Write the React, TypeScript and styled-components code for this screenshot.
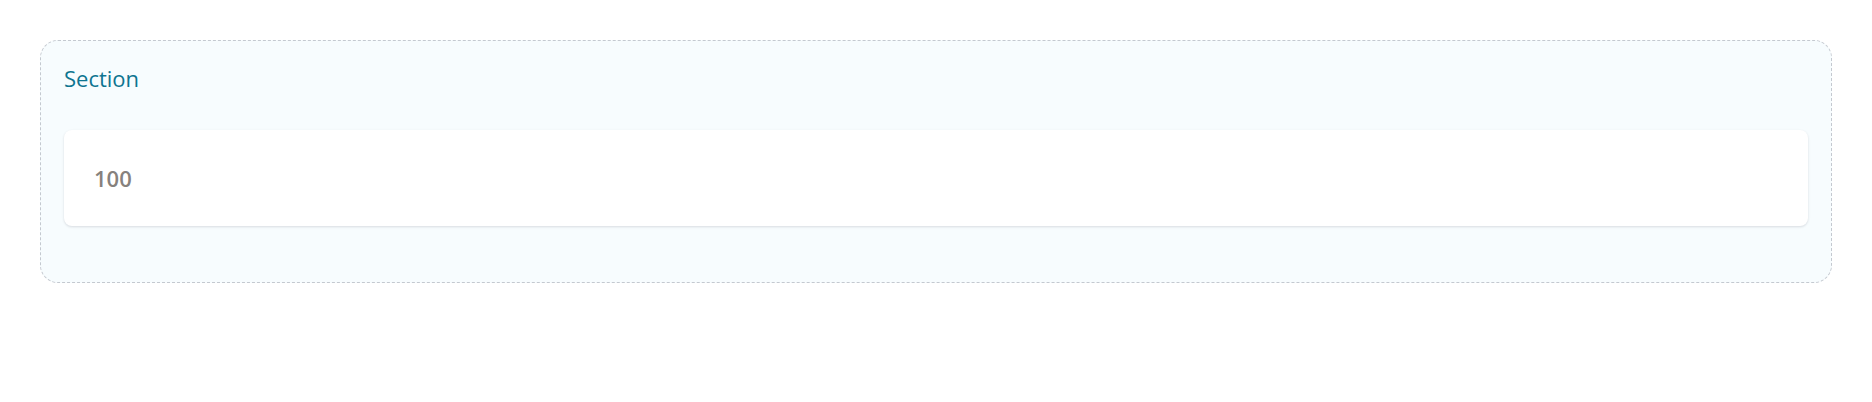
import styled, { createGlobalStyle } from 'styled-components';

const GlobalStyle = createGlobalStyle`
  html, body {
    margin: 0;
    padding: 0;
    background: #ffffff;
  }
  body {
    font-family: 'Open Sans', 'Noto Sans', sans-serif;
  }
`;

const Page = styled.div`
  padding: 40px;
`;

const Section = styled.section`
  border: 1px dashed #c4c9d0;
  border-radius: 18px;
  background: #f7fcfe;
  padding: 22px 23px 56px;
`;

const SectionTitle = styled.h2`
  margin: 0 0 37px;
  font-size: 22px;
  font-weight: 400;
  line-height: 30px;
  color: #0e7490;
`;

const Card = styled.div`
  background: #ffffff;
  border-radius: 8px;
  padding: 30px;
  box-shadow: 0 1px 3px rgba(15, 23, 42, 0.1), 0 1px 2px rgba(15, 23, 42, 0.04);
`;

const Value = styled.div`
  font-size: 22px;
  font-weight: 600;
  line-height: 36px;
  color: #86817d;
`;

export default function App() {
  return (
    <>
      <GlobalStyle />
      <Page>
        <Section>
          <SectionTitle>Section</SectionTitle>
          <Card>
            <Value>100</Value>
          </Card>
        </Section>
      </Page>
    </>
  );
}
